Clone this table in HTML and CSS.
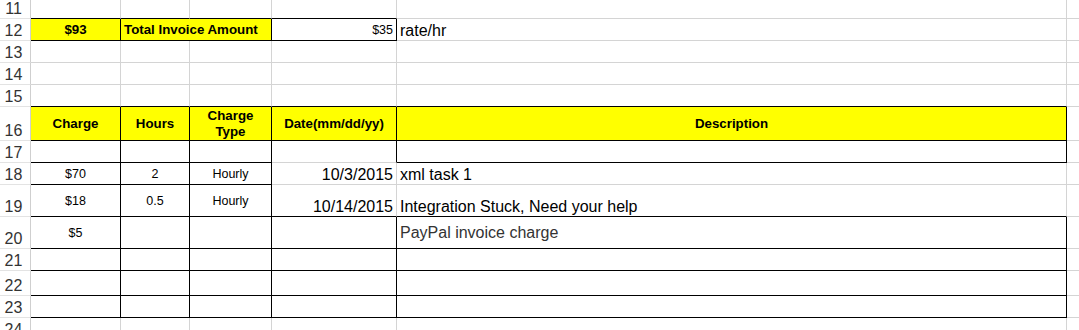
FILE: index.html
```html
<!DOCTYPE html>
<html>
<head>
<meta charset="utf-8">
<link rel="stylesheet" href="styles.css">
</head>
<body>
<div class="sheet">
  <!-- row 11 -->
  <div class="h">11</div>
  <div class="c bb"></div><div class="c bb"></div><div class="c bb"></div><div class="c bb"></div><div class="c"></div><div class="c f"></div>
  <!-- row 12 -->
  <div class="h">12</div>
  <div class="c y br bb mid ctr b">$93</div>
  <div class="c y br bb mid b span2">Total Invoice Amount</div>
  <div class="c br bb mid rt sm">$35</div>
  <div class="c bot big">rate/hr</div>
  <div class="c f"></div>
  <!-- row 13 -->
  <div class="h">13</div>
  <div class="c"></div><div class="c"></div><div class="c"></div><div class="c"></div><div class="c"></div><div class="c f"></div>
  <!-- row 14 -->
  <div class="h">14</div>
  <div class="c"></div><div class="c"></div><div class="c"></div><div class="c"></div><div class="c"></div><div class="c f"></div>
  <!-- row 15 -->
  <div class="h">15</div>
  <div class="c bb"></div><div class="c bb"></div><div class="c bb"></div><div class="c bb"></div><div class="c bb"></div><div class="c f"></div>
  <!-- row 16 -->
  <div class="h">16</div>
  <div class="c y br bb mid ctr b">Charge</div>
  <div class="c y br bb mid ctr b">Hours</div>
  <div class="c y br bb mid ctr b wrap">Charge<br>Type</div>
  <div class="c y br bb mid ctr b">Date(mm/dd/yy)</div>
  <div class="c y br bb mid ctr b">Description</div>
  <div class="c f"></div>
  <!-- row 17 -->
  <div class="h">17</div>
  <div class="c br bb"></div><div class="c br bb"></div><div class="c br bb"></div><div class="c br"></div><div class="c br bb"></div><div class="c f"></div>
  <!-- row 18 -->
  <div class="h">18</div>
  <div class="c br bb mid ctr sm">$70</div>
  <div class="c br bb mid ctr sm">2</div>
  <div class="c br bb mid ctr sm">Hourly</div>
  <div class="c bot rt big">10/3/2015</div>
  <div class="c bot big">xml task 1</div>
  <div class="c f"></div>
  <!-- row 19 -->
  <div class="h">19</div>
  <div class="c br bb mid ctr sm">$18</div>
  <div class="c br bb mid ctr sm">0.5</div>
  <div class="c br bb mid ctr sm">Hourly</div>
  <div class="c bb bot rt big">10/14/2015</div>
  <div class="c bb bot big">Integration Stuck, Need your help</div>
  <div class="c f"></div>
  <!-- row 20 -->
  <div class="h">20</div>
  <div class="c br bb mid ctr sm">$5</div>
  <div class="c br bb"></div>
  <div class="c br bb"></div>
  <div class="c br bb"></div>
  <div class="c br bb mid big grey">PayPal invoice charge</div>
  <div class="c f"></div>
  <!-- row 21 -->
  <div class="h">21</div>
  <div class="c br bb"></div><div class="c br bb"></div><div class="c br bb"></div><div class="c br bb"></div><div class="c br bb"></div><div class="c f"></div>
  <!-- row 22 -->
  <div class="h">22</div>
  <div class="c br bb"></div><div class="c br bb"></div><div class="c br bb"></div><div class="c br bb"></div><div class="c br bb"></div><div class="c f"></div>
  <!-- row 23 -->
  <div class="h">23</div>
  <div class="c br bb"></div><div class="c br bb"></div><div class="c br bb"></div><div class="c br bb"></div><div class="c br bb"></div><div class="c f"></div>
  <!-- row 24 -->
  <div class="h">24</div>
  <div class="c"></div><div class="c"></div><div class="c"></div><div class="c"></div><div class="c"></div><div class="c f"></div>
</div>
</body>
</html>
```

FILE: styles.css
```css
html, body {
  margin: 0;
  padding: 0;
  background: #ffffff;
  overflow: hidden;
}

.sheet {
  display: grid;
  grid-template-columns: 31px 90px 69px 82px 125px 670px 12px;
  grid-template-rows: 19px 22px 22px 22px 22px 34px 22px 22px 32px 32px 22px 25px 22px 22px;
  width: 1079px;
  font-family: "Liberation Sans", Arial, sans-serif;
  color: #000;
}

.h {
  box-sizing: border-box;
  border-right: 1px solid #cfcfcf;
  border-bottom: 1px solid #e3e3e3;
  display: flex;
  align-items: flex-end;
  justify-content: center;
  padding-right: 3px;
  font-size: 16px;
  line-height: 18px;
  color: #333;
}

.c {
  box-sizing: border-box;
  border-right: 1px solid #d4d4d4;
  border-bottom: 1px solid #d4d4d4;
  display: flex;
  padding: 0 3px;
  white-space: nowrap;
  overflow: visible;
  min-width: 0;
}

.f { border-right: none; }

.br { border-right-color: #000; }
.bb { border-bottom-color: #000; }
.y { background: #ffff00; }

.span2 { grid-column: span 2; }

.mid { align-items: center; }
.bot { align-items: flex-end; }
.ctr { justify-content: center; text-align: center; }
.rt { justify-content: flex-end; }

.b {
  font-weight: bold;
  font-size: 13.3px;
  line-height: 16px;
}

.sm {
  font-size: 12.5px;
  line-height: 14px;
}

.big {
  font-size: 16px;
  line-height: 18px;
}

.grey { color: #333; }

.wrap { white-space: normal; }
```
